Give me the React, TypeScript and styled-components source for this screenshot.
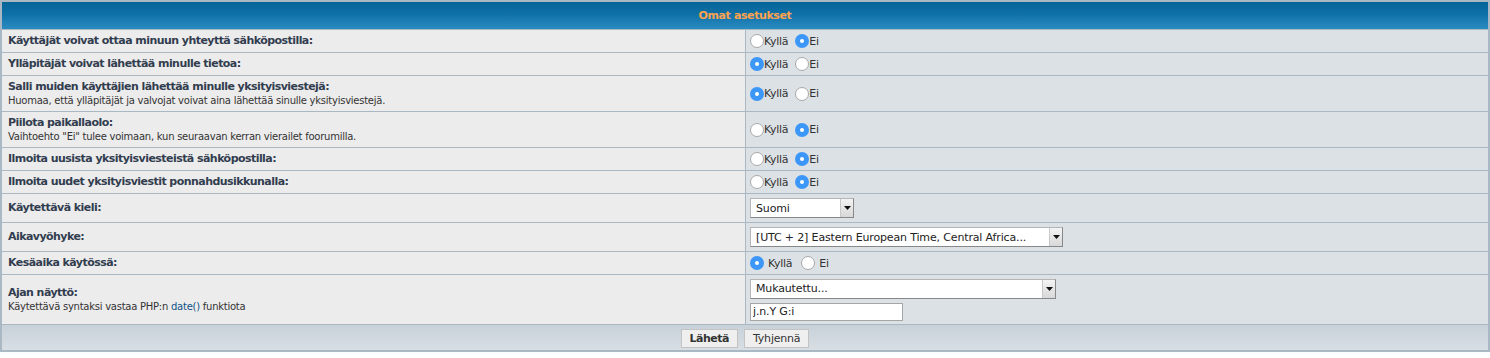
import React from "react";
import styled, { createGlobalStyle } from "styled-components";

const Global = createGlobalStyle`
  html, body { margin: 0; padding: 0; background: #fff; }
  body { font-family: "DejaVu Sans", Verdana, sans-serif; color: #323D4F; }
`;

const Table = styled.form`
  display: grid;
  grid-template-columns: 743px 1fr;
  gap: 1px;
  padding: 2px;
  background: #A9B8C2;
  width: 1490px;
  box-sizing: border-box;
`;

const Header = styled.div`
  grid-column: 1 / -1;
  height: 27px;
  display: flex;
  align-items: center;
  justify-content: center;
  background: linear-gradient(to bottom, #066497 0%, #0E71A8 45%, #2A8BC0 100%);
  color: #FFA34F;
  font-weight: bold;
  font-size: 11px;
  letter-spacing: -0.4px;
`;

const LabelCell = styled.div<{ $h: number }>`
  background: #ECECEC;
  height: ${(p) => p.$h}px;
  padding: 0 6px;
  display: flex;
  flex-direction: column;
  justify-content: center;
  box-sizing: border-box;
`;

const ValueCell = styled.div<{ $h: number }>`
  background: #DCE1E5;
  height: ${(p) => p.$h}px;
  padding: 0 4px;
  display: flex;
  flex-direction: column;
  justify-content: center;
  gap: 4px;
  box-sizing: border-box;
  font-size: 11px;
  color: #333;
`;

const Label = styled.span`
  font-weight: bold;
  font-size: 11px;
  color: #323D4F;
  line-height: 14px;
  letter-spacing: -0.55px;
`;

const Explain = styled.span`
  font-size: 10px;
  color: #333;
  line-height: 13px;
  letter-spacing: -0.25px;
`;

const Link = styled.a`
  color: #105289;
  text-decoration: none;
`;

const RadioRow = styled.div`
  display: flex;
  align-items: center;
`;

const Option = styled.label<{ $spaced?: boolean }>`
  display: inline-flex;
  align-items: center;
  gap: ${(p) => (p.$spaced ? "4px" : "0")};
  margin-right: ${(p) => (p.$spaced ? "9px" : "7px")};
  font-size: 11px;
  color: #333;
  letter-spacing: -0.3px;
`;

const Radio = styled.input.attrs({ type: "radio" })`
  appearance: none;
  -webkit-appearance: none;
  margin: 0;
  width: 14px;
  height: 14px;
  border-radius: 50%;
  box-sizing: border-box;
  border: 1px solid #A8A8A8;
  background: #fff;
  display: inline-flex;
  align-items: center;
  justify-content: center;
  &:checked {
    border: none;
    background: #3C97F8;
  }
  &:checked::after {
    content: "";
    width: 4px;
    height: 4px;
    border-radius: 50%;
    background: #fff;
  }
`;

const SelectWrap = styled.span<{ $w: number }>`
  position: relative;
  display: inline-block;
  width: ${(p) => p.$w}px;
  height: 20px;
`;

const Select = styled.select`
  appearance: none;
  -webkit-appearance: none;
  width: 100%;
  height: 100%;
  margin: 0;
  padding: 0 16px 0 5px;
  border: 1px solid #B5B5B5;
  border-right-color: #888;
  border-bottom-color: #888;
  background: #fff;
  font-family: "DejaVu Sans", Verdana, sans-serif;
  font-size: 11px;
  letter-spacing: -0.15px;
  color: #222;
  border-radius: 0;
  box-sizing: border-box;
`;

const Arrow = styled.span`
  position: absolute;
  right: 1px;
  top: 1px;
  bottom: 1px;
  width: 12px;
  background: linear-gradient(to bottom, #F4F4F4, #D8D8D8);
  border-left: 1px solid #C8C8C8;
  display: flex;
  align-items: center;
  justify-content: center;
  pointer-events: none;
`;

const TextInput = styled.input`
  width: 153px;
  height: 18px;
  margin: 0;
  padding: 0 2px;
  border: 1px solid #A5A5A5;
  background: #fff;
  font-family: "DejaVu Sans", Verdana, sans-serif;
  font-size: 11px;
  letter-spacing: -0.15px;
  color: #222;
  box-sizing: border-box;
`;

const Footer = styled.div`
  grid-column: 1 / -1;
  height: 25px;
  display: flex;
  align-items: center;
  justify-content: center;
  gap: 6px;
  background: linear-gradient(to bottom, #C7D1D8, #D8DFE4);
`;

const Button = styled.button<{ $primary?: boolean }>`
  height: 19px;
  padding: 0 8px;
  margin-top: 2px;
  background: #EFEFEF;
  border: 1px solid #C3C3C3;
  font-family: "DejaVu Sans", Verdana, sans-serif;
  font-size: 11px;
  font-weight: ${(p) => (p.$primary ? "bold" : "normal")};
  letter-spacing: ${(p) => (p.$primary ? "-0.5px" : "-0.2px")};
  color: #333;
  border-radius: 0;
`;

const Caret = () => (
  <svg width="7" height="4" viewBox="0 0 7 4">
    <path d="M0 0 L7 0 L3.5 4 Z" fill="#111" />
  </svg>
);

type YesNoProps = { name: string; yes: boolean; spaced?: boolean };
const YesNo = ({ name, yes, spaced }: YesNoProps) => (
  <RadioRow>
    <Option $spaced={spaced}>
      <Radio name={name} defaultChecked={yes} />
      Kyllä
    </Option>
    <Option $spaced={spaced}>
      <Radio name={name} defaultChecked={!yes} />
      Ei
    </Option>
  </RadioRow>
);

export default function App() {
  return (
    <>
      <Global />
      <Table onSubmit={(e) => e.preventDefault()}>
        <Header>Omat asetukset</Header>

        <LabelCell $h={22}>
          <Label>Käyttäjät voivat ottaa minuun yhteyttä sähköpostilla:</Label>
        </LabelCell>
        <ValueCell $h={22}>
          <YesNo name="email" yes={false} />
        </ValueCell>

        <LabelCell $h={22}>
          <Label>Ylläpitäjät voivat lähettää minulle tietoa:</Label>
        </LabelCell>
        <ValueCell $h={22}>
          <YesNo name="massemail" yes={true} />
        </ValueCell>

        <LabelCell $h={35}>
          <Label>Salli muiden käyttäjien lähettää minulle yksityisviestejä:</Label>
          <Explain>Huomaa, että ylläpitäjät ja valvojat voivat aina lähettää sinulle yksityisviestejä.</Explain>
        </LabelCell>
        <ValueCell $h={35}>
          <YesNo name="pm" yes={true} />
        </ValueCell>

        <LabelCell $h={35}>
          <Label>Piilota paikallaolo:</Label>
          <Explain>Vaihtoehto "Ei" tulee voimaan, kun seuraavan kerran vierailet foorumilla.</Explain>
        </LabelCell>
        <ValueCell $h={35}>
          <YesNo name="hide" yes={false} />
        </ValueCell>

        <LabelCell $h={22}>
          <Label>Ilmoita uusista yksityisviesteistä sähköpostilla:</Label>
        </LabelCell>
        <ValueCell $h={22}>
          <YesNo name="notifypm" yes={false} />
        </ValueCell>

        <LabelCell $h={22}>
          <Label>Ilmoita uudet yksityisviestit ponnahdusikkunalla:</Label>
        </LabelCell>
        <ValueCell $h={22}>
          <YesNo name="popup" yes={false} />
        </ValueCell>

        <LabelCell $h={28}>
          <Label>Käytettävä kieli:</Label>
        </LabelCell>
        <ValueCell $h={28}>
          <SelectWrap $w={104}>
            <Select defaultValue="fi">
              <option value="fi">Suomi</option>
            </Select>
            <Arrow><Caret /></Arrow>
          </SelectWrap>
        </ValueCell>

        <LabelCell $h={28}>
          <Label>Aikavyöhyke:</Label>
        </LabelCell>
        <ValueCell $h={28}>
          <SelectWrap $w={313}>
            <Select defaultValue="2">
              <option value="2">[UTC + 2] Eastern European Time, Central Africa...</option>
            </Select>
            <Arrow><Caret /></Arrow>
          </SelectWrap>
        </ValueCell>

        <LabelCell $h={22}>
          <Label>Kesäaika käytössä:</Label>
        </LabelCell>
        <ValueCell $h={22}>
          <YesNo name="dst" yes={true} spaced />
        </ValueCell>

        <LabelCell $h={49}>
          <Label>Ajan näyttö:</Label>
          <Explain>
            Käytettävä syntaksi vastaa PHP:n <Link href="#">date()</Link> funktiota
          </Explain>
        </LabelCell>
        <ValueCell $h={49}>
          <SelectWrap $w={306}>
            <Select defaultValue="custom">
              <option value="custom">Mukautettu...</option>
            </Select>
            <Arrow><Caret /></Arrow>
          </SelectWrap>
          <TextInput defaultValue="j.n.Y G:i" />
        </ValueCell>

        <Footer>
          <Button $primary type="submit">Lähetä</Button>
          <Button type="reset">Tyhjennä</Button>
        </Footer>
      </Table>
    </>
  );
}
